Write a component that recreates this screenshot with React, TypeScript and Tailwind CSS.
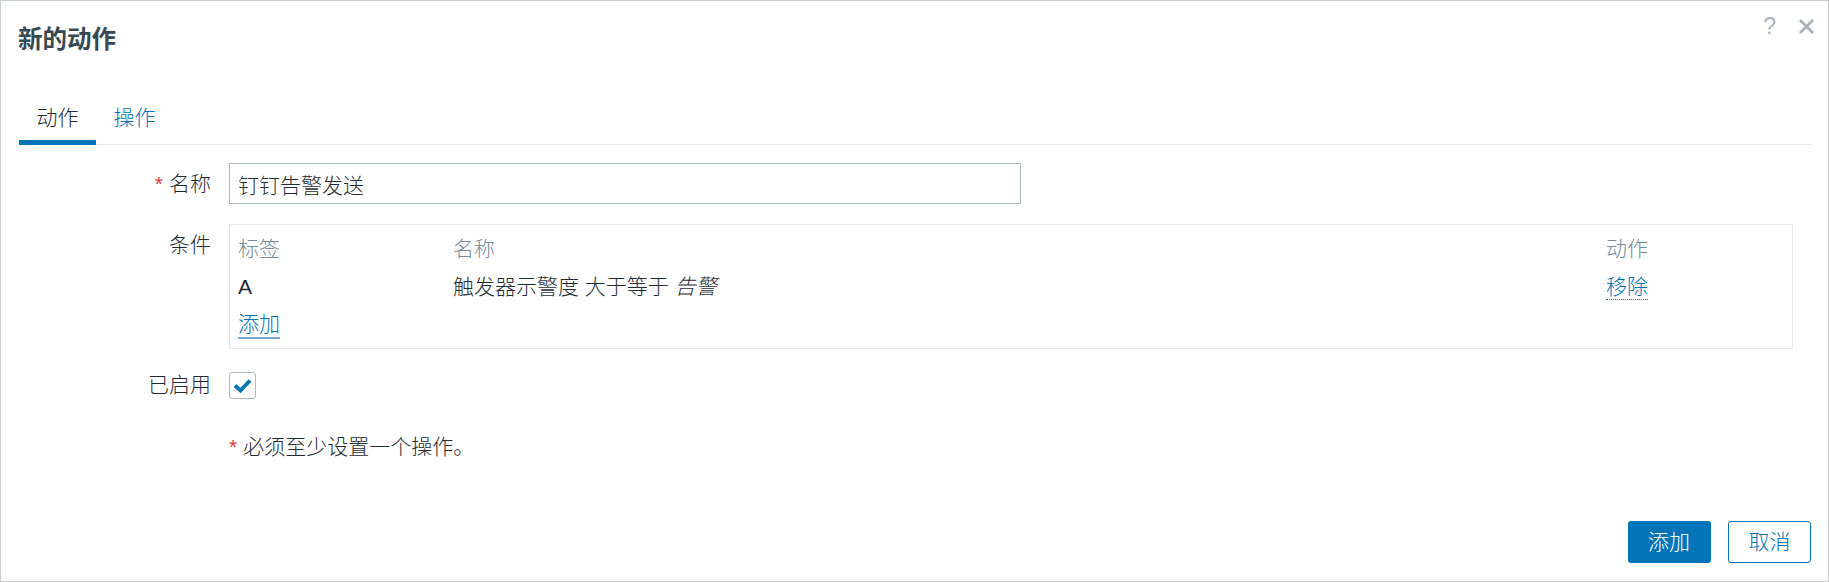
import React from "react";

const conditions = [{ label: "A", name: "触发器示警度 大于等于", value: "告警" }];

function Check() {
  return (
    <svg width="19" height="15" viewBox="0 0 19 15" fill="none">
      <path d="M2 7.5l5.5 5L17 2.5" stroke="#0275b8" strokeWidth="3.8" strokeLinejoin="miter" />
    </svg>
  );
}

export default function App() {
  return (
    <div className="w-[1829px] h-[582px] border border-[#c6d0d6] bg-white flex flex-col relative text-[21px] font-light text-[#1f2c33] font-['Liberation_Sans','Noto_Sans_CJK_SC',sans-serif]">
      {/* header */}
      <div className="h-[78px] flex items-center pl-[17px] shrink-0">
        <h4 className="text-[24.5px] font-bold leading-[30px] text-[#364955]">新的动作</h4>
      </div>
      <div className="absolute right-[13px] top-[12px] flex items-center gap-[22px] text-[#a6b4bc]">
        <span className="text-[23px] leading-[26px] font-normal">?</span>
        <svg width="17" height="15" viewBox="0 0 17 15">
          <path d="M2 1l13 13M15 1L2 14" stroke="#a6b4bc" strokeWidth="2.8" />
        </svg>
      </div>

      {/* tabs */}
      <ul className="mt-[17px] ml-[18px] mr-[17px] flex border-b border-[#e3e8eb]">
        <li className="-mb-px h-[49px] px-[17.5px] leading-[44px] border-b-[5px] border-[#0275b8]">动作</li>
        <li className="-mb-px h-[49px] px-[17.5px] leading-[44px] text-[#0275b8]">操作</li>
      </ul>

      {/* form */}
      <div className="ml-[18px] grid grid-cols-[192px_1fr] gap-x-[18px]">
        <div className="mt-[18px] text-right leading-[41px]">
          <span className="text-[#e33734] mr-[6px]">*</span>名称
        </div>
        <div className="mt-[18px]">
          <input
            defaultValue="钉钉告警发送"
            className="w-[792px] h-[41px] border border-[#acbbc2] px-[8px] text-[21px] font-light text-[#1f2c33] outline-none"
          />
        </div>

        <div className="mt-[20px] text-right leading-[42px]">条件</div>
        <div className="mt-[20px] w-[1564px] border border-[#e3e8eb] pt-[5px] pb-[4px] pl-[8px]">
          <div className="h-[38px] flex items-center text-[#768d99]">
            <div className="w-[215px]">标签</div>
            <div className="w-[1153px]">名称</div>
            <div>动作</div>
          </div>
          {conditions.map((c) => (
            <div key={c.label} className="h-[38px] flex items-center">
              <div className="w-[215px]">{c.label}</div>
              <div className="w-[1153px]">
                {c.name} <i>{c.value}</i>
              </div>
              <div>
                <span className="text-[#0275b8] border-b border-dotted border-[#0275b8] leading-[24px] inline-block">移除</span>
              </div>
            </div>
          ))}
          <div className="h-[38px] flex items-center">
            <span className="text-[#0275b8] border-b-2 border-[#74aad1] leading-[26px] inline-block">添加</span>
          </div>
        </div>

        <div className="mt-[15px] text-right leading-[42px]">已启用</div>
        <div className="mt-[15px] h-[42px] flex items-center">
          <div className="w-[27px] h-[27px] border border-[#acbbc2] rounded-[3px] flex items-center justify-center">
            <Check />
          </div>
        </div>

        <div />
        <div className="mt-[20px] leading-[42px]">
          <span className="text-[#e33734] mr-[6px]">*</span>必须至少设置一个操作。
        </div>
      </div>

      {/* footer */}
      <div className="mt-auto flex justify-end gap-[17.5px] pr-[17px] pb-[18px]">
        <button className="w-[83px] h-[42px] rounded-[3px] bg-[#0275b8] text-white text-[21px] font-light">添加</button>
        <button className="w-[83px] h-[42px] rounded-[3px] border border-[#0275b8] bg-white text-[#0275b8] text-[21px] font-light">
          取消
        </button>
      </div>
    </div>
  );
}
